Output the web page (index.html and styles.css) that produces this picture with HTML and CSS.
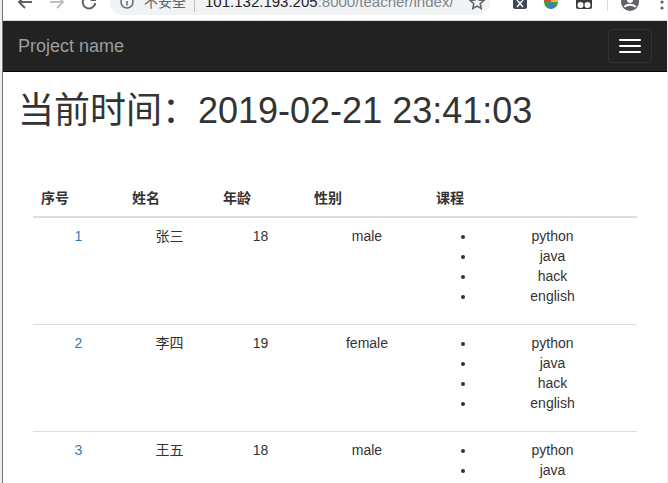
FILE: index.html
```html
<!DOCTYPE html>
<html lang="zh">
<head>
    <meta charset="UTF-8">
    <meta name="viewport" content="width=device-width, initial-scale=1.0">
    <title>Project name</title>
    <link rel="stylesheet" href="styles.css">
</head>
<body>

<!-- browser toolbar, cut off at the top of the shot -->
<div class="browser">
    <div class="toolbar">
        <svg class="nav-icon" width="16" height="16" viewBox="0 0 16 16"><path d="M15 8H2M8 2L2 8l6 6" fill="none" stroke="#5f6368" stroke-width="2"/></svg>
        <svg class="nav-icon" width="16" height="16" viewBox="0 0 16 16"><path d="M1 8h13M8 2l6 6-6 6" fill="none" stroke="#bdc1c6" stroke-width="2"/></svg>
        <svg class="nav-icon" width="16" height="16" viewBox="0 0 16 16"><path d="M13.5 5A6.3 6.3 0 1 0 14.3 9" fill="none" stroke="#5f6368" stroke-width="2"/><path d="M15 1v6H9z" fill="#5f6368"/></svg>
        <div class="omnibox">
            <svg class="info" width="14" height="14" viewBox="0 0 14 14"><circle cx="7" cy="7" r="6" fill="none" stroke="#5f6368" stroke-width="1.4"/><path d="M7 6v4.500M7 3.500v1.500" stroke="#5f6368" stroke-width="1.4"/></svg>
            <span class="secure">不安全</span>
            <span class="url">101.132.193.205<span class="url-rest">:8000/teacher/index/</span></span>
            <svg class="star" width="16" height="16" viewBox="0 0 16 16"><path d="M8 1.500l2 4.500 4.800.5-3.600 3.200 1 4.800L8 12.100 3.800 14.500l1-4.800L1.200 6.500 6 6z" fill="none" stroke="#5f6368" stroke-width="1.500"/></svg>
        </div>
        <div class="extensions">
            <svg width="16" height="16" viewBox="0 0 16 16"><rect x="1" y="1" width="14" height="14" rx="2" fill="#3c4858"/><path d="M5 6l6 7M11 6l-6 7" stroke="#fff" stroke-width="1.500"/></svg>
            <svg width="16" height="16" viewBox="0 0 16 16"><circle cx="8" cy="8" r="7" fill="#3f9b4c"/><path d="M1 8a7 7 0 0 1 7-7v7z" fill="#dc4a38"/><path d="M8 1a7 7 0 0 1 7 7H8z" fill="#f4b92e"/><path d="M4 13l4-5 4 5-4 2z" fill="#3c78d8"/></svg>
            <svg width="20" height="16" viewBox="0 0 20 16"><rect x="2" y="1" width="16" height="14" rx="2" fill="#3a3a3a"/><circle cx="6.500" cy="11" r="3" fill="#fff"/><circle cx="13.500" cy="11" r="3" fill="#fff"/></svg>
        </div>
        <span class="toolbar-sep"></span>
        <svg class="profile" width="18" height="18" viewBox="0 0 18 18"><circle cx="9" cy="9" r="9" fill="#5f6368"/><circle cx="9" cy="7" r="3" fill="#fff"/><path d="M3.500 14c2-3 9-3 11 0" fill="none" stroke="#fff" stroke-width="2"/></svg>
        <svg class="dots" width="4" height="16" viewBox="0 0 4 16"><circle cx="2" cy="2" r="1.600" fill="#5f6368"/><circle cx="2" cy="8" r="1.600" fill="#5f6368"/><circle cx="2" cy="14" r="1.600" fill="#5f6368"/></svg>
    </div>
</div>

<nav class="navbar">
    <a class="brand" href="#">Project name</a>
    <button class="toggle" type="button">
        <span class="bar"></span>
        <span class="bar"></span>
        <span class="bar"></span>
    </button>
</nav>

<div class="container">
    <h1>当前时间：2019-02-21 23:41:03</h1>

    <table class="students">
        <colgroup>
            <col class="col-short">
            <col class="col-short">
            <col class="col-short">
            <col class="col-gender">
            <col>
        </colgroup>
        <thead>
            <tr>
                <th>序号</th>
                <th>姓名</th>
                <th>年龄</th>
                <th>性别</th>
                <th>课程</th>
            </tr>
        </thead>
        <tbody>
            <!-- 学生 1 -->
            <tr>
                <td><a href="#">1</a></td>
                <td>张三</td>
                <td>18</td>
                <td>male</td>
                <td>
                    <ul>
                        <li>python</li>
                        <li>java</li>
                        <li>hack</li>
                        <li>english</li>
                    </ul>
                </td>
            </tr>
            <!-- 学生 2 -->
            <tr>
                <td><a href="#">2</a></td>
                <td>李四</td>
                <td>19</td>
                <td>female</td>
                <td>
                    <ul>
                        <li>python</li>
                        <li>java</li>
                        <li>hack</li>
                        <li>english</li>
                    </ul>
                </td>
            </tr>
            <!-- 学生 3 -->
            <tr>
                <td><a href="#">3</a></td>
                <td>王五</td>
                <td>18</td>
                <td>male</td>
                <td>
                    <ul>
                        <li>python</li>
                        <li>java</li>
                        <li>hack</li>
                        <li>english</li>
                    </ul>
                </td>
            </tr>
        </tbody>
    </table>
</div>

</body>
</html>
```

FILE: styles.css
```css
html {
    height: 100%;
    padding: 0 1px 0 2px;
    box-sizing: border-box;
    overflow: hidden;
    background-color: #eee;
}
body {
    height: 100%;
    margin: 0;
    border-left: 1px solid #777;
    overflow: hidden;
    background-color: #fff;
    color: #333;
    font-family: "Liberation Sans", "Noto Sans CJK SC", sans-serif;
    font-size: 14px;
    line-height: 20px;
}
a {
    color: #337ab7;
    text-decoration: none;
}

/* browser toolbar */
.browser {
    height: 20px;
    overflow: hidden;
    border-bottom: 1px solid #dadce0;
}
.toolbar {
    display: flex;
    align-items: center;
    height: 36px;
    margin-top: -16px;
    padding-left: 14px;
}
.nav-icon {
    flex: none;
    margin-right: 16px;
}
.omnibox {
    display: flex;
    align-items: center;
    flex: none;
    width: 380px;
    height: 26px;
    margin-left: -3px;
    padding-left: 10px;
    box-sizing: border-box;
    border-radius: 13px;
    background-color: #f1f3f4;
}
.info {
    flex: none;
    margin-right: 10px;
}
.secure {
    width: 50px;
    border-right: 1px solid #bdc1c6;
    color: #5f6368;
    font-size: 14px;
}
.url {
    margin-left: 10px;
    color: #202124;
    font-size: 15px;
    white-space: nowrap;
}
.url-rest {
    color: #80868b;
}
.star {
    flex: none;
    margin-left: auto;
    margin-right: 5px;
}
.extensions {
    display: flex;
    align-items: center;
    gap: 15px;
    margin-left: 22px;
}
.toolbar-sep {
    width: 1px;
    height: 18px;
    margin-left: 13px;
    background-color: #dadce0;
}
.profile {
    flex: none;
    margin-left: 13px;
}
.dots {
    flex: none;
    margin-left: 21px;
}

/* navbar */
.navbar {
    display: flex;
    align-items: center;
    justify-content: space-between;
    height: 50px;
    padding: 0 15px;
    border-bottom: 1px solid #080808;
    background-color: #222;
}
.brand {
    color: #9d9d9d;
    font-size: 18px;
}
.toggle {
    display: flex;
    flex-direction: column;
    gap: 4px;
    width: 44px;
    height: 34px;
    padding: 9px 10px;
    border: 1px solid #333;
    border-radius: 4px;
    background-color: transparent;
}
.bar {
    display: block;
    width: 22px;
    height: 2px;
    border-radius: 1px;
    background-color: #fff;
}

/* content */
.container {
    padding: 0 15px;
}
h1 {
    margin: 19px 0 49px;
    font-size: 36px;
    font-weight: 400;
    line-height: 40px;
}
.students {
    width: 604px;
    margin-left: 15px;
    border-collapse: collapse;
    table-layout: fixed;
}
.col-short {
    width: 91px;
}
.col-gender {
    width: 122px;
}
th {
    padding: 8px;
    border-bottom: 2px solid #ddd;
    text-align: left;
    font-weight: bold;
}
td {
    padding: 8px;
    border-bottom: 1px solid #ddd;
    text-align: center;
    vertical-align: top;
}
ul {
    margin: 0 0 10px;
    padding-left: 40px;
}
```
